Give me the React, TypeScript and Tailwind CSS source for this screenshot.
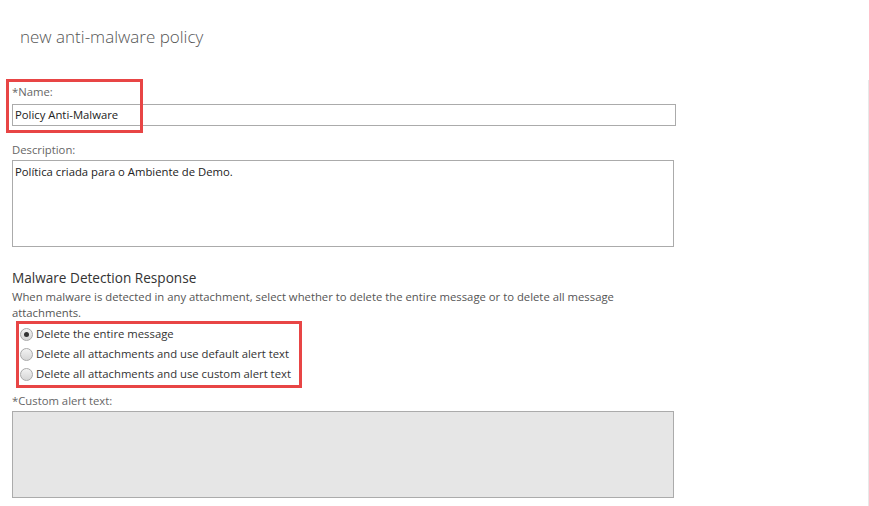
import { useState } from 'react';

const font = { fontFamily: '"Segoe UI", "Open Sans", "Noto Sans", sans-serif' };

const options = [
  'Delete the entire message',
  'Delete all attachments and use default alert text',
  'Delete all attachments and use custom alert text',
];

const Radio = ({ checked }: { checked: boolean }) => (
  <span className="flex h-[13px] w-[13px] items-center justify-center rounded-full border border-[#a9a9a9] bg-gradient-to-b from-[#f2f2f2] to-[#d6d6d6]">
    {checked && <span className="h-[5px] w-[5px] rounded-full bg-[#333]" />}
  </span>
);

export default function App() {
  const [choice, setChoice] = useState(0);

  return (
    <div className="relative h-[506px] w-[869px] overflow-hidden bg-white text-[11.3px] text-[#444]" style={font}>
      <h1 className="pl-5 pt-[25px] text-[17px] font-light leading-6 text-[#555]">new anti-malware policy</h1>

      <div className="mt-[31px] h-[426px] border-r border-[#e8e8e8]">
        <div className="relative pl-3 pt-[4px]">
          {/* annotation box */}
          <div className="pointer-events-none absolute left-[6px] top-[-1px] h-[54px] w-[137px] border-[3px] border-[#e84545]" />

          <label className="block leading-4 text-[#666]">*Name:</label>
          <div className="mt-[4px] flex h-[22px] w-[664px] items-center border border-[#ababab] px-[2px] text-[#222]">
            Policy Anti-Malware
          </div>

          <label className="mt-[16px] block leading-4 text-[#666]">Description:</label>
          <div className="mt-[2px] h-[87px] w-[662px] border border-[#ababab] px-[2px] pt-[3px] leading-4 text-[#222]">
            Política criada para o Ambiente de Demo.
          </div>

          <h2 className="mt-[21px] text-[13.6px] leading-5 text-[#333]">Malware Detection Response</h2>
          <p className="mt-[1px] w-[640px] leading-4 text-[#555]">
            When malware is detected in any attachment, select whether to delete the entire message or to delete all message attachments.
          </p>

          <div className="ml-1 w-fit border-[3px] border-[#e84545] pb-[1px] pl-[1px] pr-[8px]">
            {options.map((label, i) => (
              <div
                key={label}
                onClick={() => setChoice(i)}
                className="flex h-5 cursor-pointer items-center gap-[3px] text-[#333]"
              >
                <Radio checked={choice === i} />
                <span>{label}</span>
              </div>
            ))}
          </div>

          <label className="mt-[5px] block leading-4 text-[#666]">*Custom alert text:</label>
          <div className="mt-[2px] h-[87px] w-[662px] border border-[#ababab] bg-[#e6e6e6]" />
        </div>
      </div>
    </div>
  );
}
